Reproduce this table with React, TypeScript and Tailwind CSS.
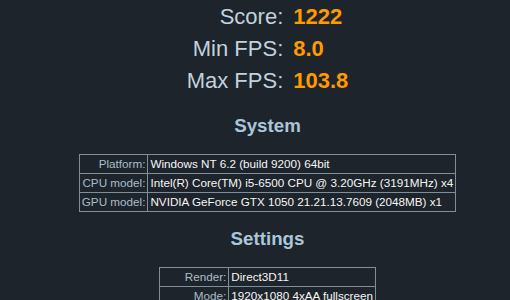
import React from 'react';

interface Row {
  label: string;
  value: string;
}

const scores: Row[] = [
  { label: 'Score:', value: '1222' },
  { label: 'Min FPS:', value: '8.0' },
  { label: 'Max FPS:', value: '103.8' }
];

const system: Row[] = [
  { label: 'Platform:', value: 'Windows NT 6.2 (build 9200) 64bit' },
  { label: 'CPU model:', value: 'Intel(R) Core(TM) i5-6500 CPU @ 3.20GHz (3191MHz) x4' },
  { label: 'GPU model:', value: 'NVIDIA GeForce GTX 1050 21.21.13.7609 (2048MB) x1' }
];

const settings: Row[] = [
  { label: 'Render:', value: 'Direct3D11' },
  { label: 'Mode:', value: '1920x1080 4xAA fullscreen' },
  { label: 'Preset:', value: 'Custom' },
  { label: 'Quality:', value: 'Ultra' },
  { label: 'Tessellation:', value: 'Extreme' }
];

const InfoTable: React.FC<{ rows: Row[] }> = ({ rows }) => (
  <table className="mx-auto border-collapse text-[11.7px] leading-[18px]">
    <tbody>
      {rows.map((r) => (
        <tr key={r.label} className="h-[19px]">
          <td className="border border-[#7f8e99] pl-[2px] pr-[2px] text-right text-[#a9bccb] whitespace-nowrap">
            {r.label}
          </td>
          <td className="border border-[#7f8e99] pl-[2px] pr-[2px] text-left text-[#f6f6f6] whitespace-nowrap">
            {r.value}
          </td>
        </tr>
      ))}
    </tbody>
  </table>
);

export default function App() {
  return (
    <div
      className="w-[510px] h-[300px] overflow-hidden bg-[#1d242b] pl-[25px]"
      style={{ fontFamily: '"Liberation Sans", Arial, sans-serif' }}
    >
      <div className="flex flex-col">
        {/* score block */}
        <div className="mx-auto grid grid-cols-[auto_auto] gap-x-[10px] text-[22px] leading-[25px]">
          {scores.map((s) => (
            <React.Fragment key={s.label}>
              <div className="h-8 flex items-center justify-end text-[#c2d2de]">{s.label}</div>
              <div className="h-8 flex items-center font-bold text-[#ff9a00]">{s.value}</div>
            </React.Fragment>
          ))}
        </div>

        <h3 className="mt-[19px] mb-[17px] h-[22px] leading-[22px] text-center text-[18.72px] font-bold text-[#abc6d9]">
          System
        </h3>
        <InfoTable rows={system} />

        <h3 className="mt-4 mb-[17px] h-[22px] leading-[22px] text-center text-[18.72px] font-bold text-[#abc6d9]">
          Settings
        </h3>
        <InfoTable rows={settings} />
      </div>
    </div>
  );
}
